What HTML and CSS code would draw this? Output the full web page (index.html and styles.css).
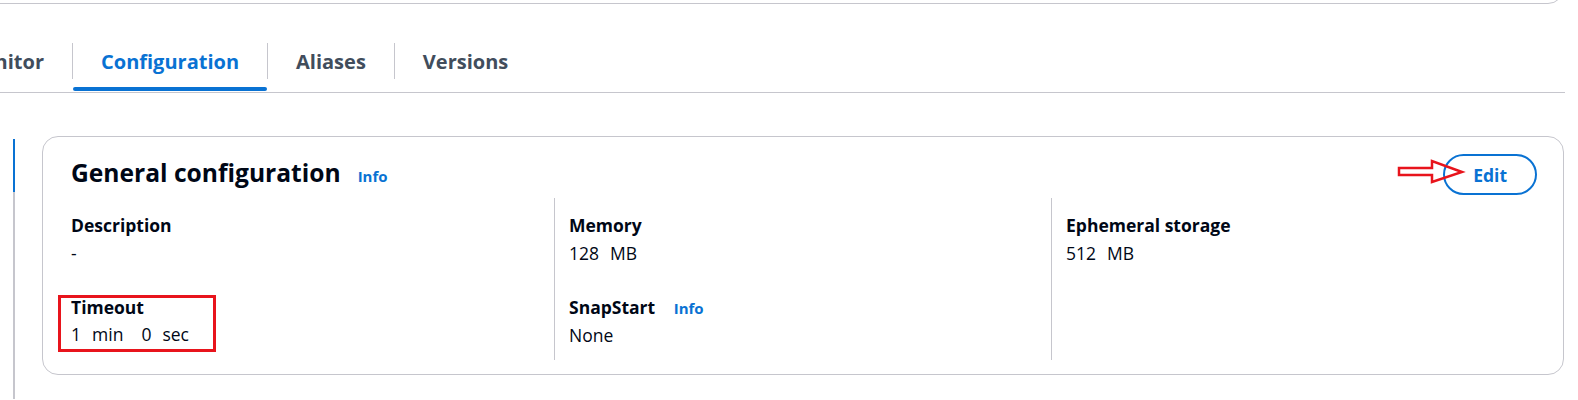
FILE: index.html
```html
<!DOCTYPE html>
<html lang="en">
<head>
<meta charset="utf-8">
<title>General configuration</title>
<link rel="stylesheet" href="styles.css">
</head>
<body>
<div class="top-card"></div>
<nav class="tabs">
  <div class="tab tab-first"><span class="tab-label">Monitor</span><span class="tab-ind"></span></div>
  <div class="tab active"><span class="tab-label">Configuration</span><span class="tab-ind"></span></div>
  <div class="tab"><span class="tab-label">Aliases</span><span class="tab-ind"></span></div>
  <div class="tab"><span class="tab-label">Versions</span><span class="tab-ind"></span></div>
</nav>
<div class="layout">
  <div class="rail"><span class="rail-active"></span></div>
  <section class="card">
    <div class="card-header">
      <h2 class="card-title">General configuration <a class="info" href="#">Info</a></h2>
      <button class="btn" type="button">Edit</button>
    </div>
    <div class="cols">
      <div class="col">
        <div class="kv">
          <div class="kv-label">Description</div>
          <div class="kv-value">-</div>
        </div>
        <div class="kv">
          <div class="kv-label">Timeout</div>
          <div class="kv-value"><span class="part">1</span><span class="part">min</span><span class="part wide">0</span><span class="part">sec</span></div>
        </div>
      </div>
      <div class="col">
        <div class="kv">
          <div class="kv-label">Memory</div>
          <div class="kv-value"><span class="part">128</span><span class="part">MB</span></div>
        </div>
        <div class="kv">
          <div class="kv-label">SnapStart <a class="info info-sm" href="#">Info</a></div>
          <div class="kv-value">None</div>
        </div>
      </div>
      <div class="col">
        <div class="kv">
          <div class="kv-label">Ephemeral storage</div>
          <div class="kv-value"><span class="part">512</span><span class="part">MB</span></div>
        </div>
      </div>
    </div>
  </section>
</div>
<div class="annot-box"></div>
<svg class="annot-arrow" width="72" height="30" viewBox="0 0 72 30" xmlns="http://www.w3.org/2000/svg">
  <polygon points="4,11 37,11 37,4 67,15 37,25 37,18 4,18" fill="none" stroke="#e8141c" stroke-width="2.5" stroke-linejoin="miter"/>
</svg>
</body>
</html>
```
FILE: styles.css
```css
* { box-sizing: border-box; }

html, body {
  margin: 0;
  background: #ffffff;
}

body {
  position: relative;
  height: 400px;
  overflow: hidden;
  font-family: "Open Sans", "Noto Sans", Arial, sans-serif;
  color: #000716;
}

.top-card {
  height: 40px;
  margin: -36px 14px 0 -20px;
  border: 1px solid #c6c6cd;
  border-radius: 16px;
}

.tabs {
  display: flex;
  margin: 0 13px 0 -200px;
  padding-bottom: 1px;
  border-bottom: 1px solid #c6c6cd;
}

.tab {
  display: flex;
  flex-direction: column;
  padding-top: 39px;
}

.tab-label {
  display: flex;
  align-items: center;
  height: 36px;
  padding: 0 28px;
  border-left: 1px solid #c6c6cd;
  font-weight: 700;
  font-size: 20px;
  color: #414d5c;
  white-space: nowrap;
}

.tab-first .tab-label {
  width: 272px;
  justify-content: flex-end;
}

.tab-ind {
  height: 4px;
  margin: 8px 0 0 1px;
  border-radius: 2px;
}

.tab.active .tab-label { color: #0972d3; }
.tab.active .tab-ind { background: #0972d3; }

.layout {
  display: flex;
  align-items: flex-start;
}

.rail {
  width: 2px;
  height: 260px;
  margin: 46px 0 0 13px;
  background: #c6c6cd;
}

.rail-active {
  display: block;
  height: 53px;
  background: #0972d3;
}

.card {
  flex: 1;
  margin: 43px 14px 0 27px;
  padding: 17px 15px 14px 14px;
  border: 1px solid #c6c6cd;
  border-radius: 16px;
}

.card-header {
  display: flex;
  align-items: center;
  justify-content: space-between;
  height: 41px;
  padding: 0 11px 0 14px;
}

.card-title {
  display: flex;
  align-items: baseline;
  margin: 0;
  font-size: 24.6px;
  line-height: 32px;
  font-weight: 700;
}

.info {
  margin-left: 17px;
  font-size: 15px;
  font-weight: 700;
  color: #0972d3;
  text-decoration: none;
}

.info-sm {
  margin-left: 14px;
}

.btn {
  height: 41px;
  padding: 0 28px;
  border: 2px solid #0972d3;
  border-radius: 21px;
  background: #ffffff;
  color: #0972d3;
  font-family: inherit;
  font-size: 17.5px;
  font-weight: 700;
}

.cols {
  display: grid;
  grid-template-columns: repeat(3, 1fr);
  margin-top: 3px;
}

.col {
  padding: 15px 14px 12px;
}

.col + .col {
  border-left: 1px solid #c6c6cd;
}

.kv + .kv {
  margin-top: 29px;
}

.kv-label {
  font-size: 17.5px;
  line-height: 25px;
  font-weight: 700;
}

.kv-value {
  margin-top: 2.5px;
  font-size: 17.5px;
  line-height: 25px;
}

.part + .part { margin-left: 11px; }
.part.wide { margin-left: 18px; }

.annot-box {
  position: absolute;
  left: 58px;
  top: 295px;
  width: 158px;
  height: 57px;
  border: 3px solid #e8141c;
}

.annot-arrow {
  position: absolute;
  left: 1395px;
  top: 157px;
}
```
